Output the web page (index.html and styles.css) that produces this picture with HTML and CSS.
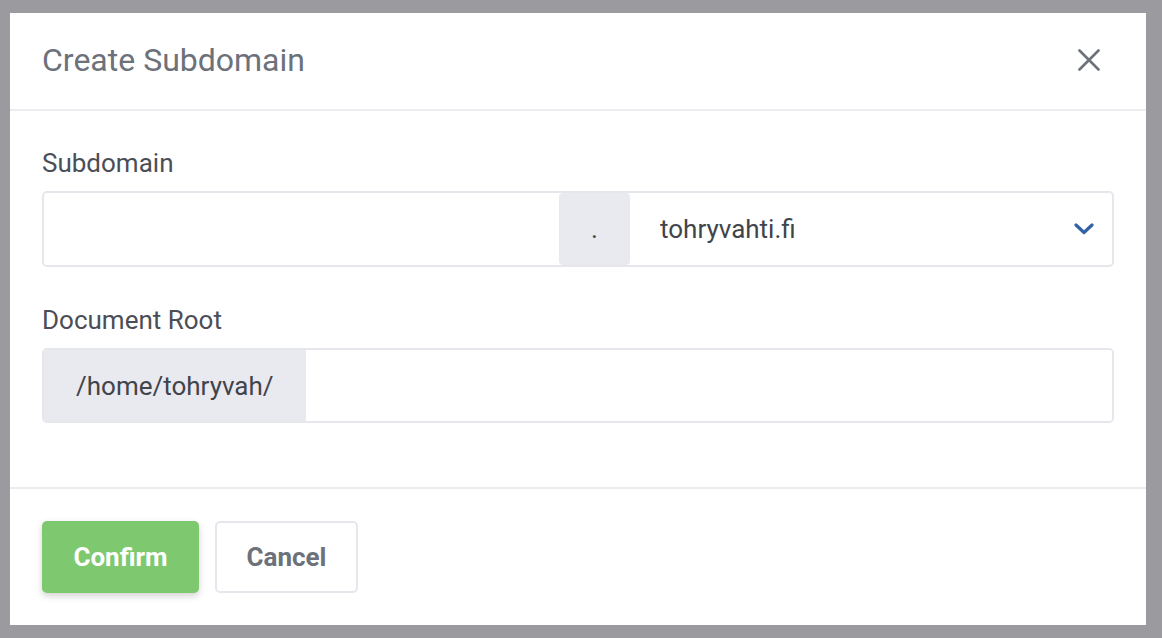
FILE: index.html
```html
<!DOCTYPE html>
<html lang="en">
<head>
<meta charset="utf-8">
<title>Create Subdomain</title>
<link rel="stylesheet" href="styles.css">
</head>
<body>
<div class="modal">
  <div class="modal-header">
    <h1 class="modal-title">Create Subdomain</h1>
    <button class="close-btn" aria-label="Close">
      <svg width="22" height="22" viewBox="0 0 22 22"><path d="M1.5 1.5 L20.5 20.5 M20.5 1.5 L1.5 20.5" stroke="#6c717a" stroke-width="2.6" stroke-linecap="round" fill="none"/></svg>
    </button>
  </div>
  <div class="modal-body">
    <div class="form-group">
      <label class="form-label">Subdomain</label>
      <div class="input-group">
        <input class="text-input sub-input" type="text">
        <span class="dot-addon">.</span>
        <div class="select">
          <span class="select-value">tohryvahti.fi</span>
          <svg class="chevron" width="20" height="12" viewBox="0 0 20 12"><path d="M2 2 L10 9.5 L18 2" stroke="#3262a8" stroke-width="3.2" fill="none" stroke-linecap="round" stroke-linejoin="round"/></svg>
        </div>
      </div>
    </div>
    <div class="form-group last">
      <label class="form-label">Document Root</label>
      <div class="input-group short">
        <span class="path-addon">/home/tohryvah/</span>
        <input class="text-input" type="text">
      </div>
    </div>
  </div>
  <div class="modal-footer">
    <button class="btn btn-confirm">Confirm</button>
    <button class="btn btn-cancel">Cancel</button>
  </div>
</div>
</body>
</html>
```

FILE: styles.css
```css
* { box-sizing: border-box; }
html, body { margin: 0; padding: 0; }
body {
  width: 1162px;
  height: 638px;
  background: #9b9b9f;
  font-family: Roboto, "Liberation Sans", sans-serif;
  overflow: hidden;
}
.modal {
  margin: 13px 0 0 10px;
  width: 1136px;
  height: 612px;
  background: #fff;
  display: flex;
  flex-direction: column;
}
.modal-header {
  height: 98px;
  border-bottom: 2px solid #ebebf0;
  display: flex;
  align-items: center;
  justify-content: space-between;
  padding: 0 46px 2px 32px;
}
.modal-title {
  margin: 0;
  font-size: 32px;
  font-weight: 400;
  line-height: 38px;
  color: #6c717a;
}
.close-btn {
  border: 0;
  background: none;
  padding: 0;
  width: 22px;
  height: 22px;
  display: flex;
  cursor: pointer;
}
.modal-body {
  padding: 38px 32px 0 32px;
  height: 378px;
  border-bottom: 2px solid #ebebf0;
}
.form-group { margin-bottom: 39px; }
.form-group.last { margin-bottom: 0; }
.form-label {
  display: block;
  font-size: 26px;
  line-height: 28px;
  color: #4b4e56;
  margin-bottom: 14px;
}
.input-group {
  display: flex;
  height: 76px;
  border: 2px solid #e6e7ec;
  border-radius: 5px;
  overflow: hidden;
}
.input-group.short { height: 75px; }
.text-input {
  flex: 1;
  border: 0;
  outline: none;
  background: #fff;
  font: inherit;
  font-size: 26px;
  padding: 0 20px;
  min-width: 0;
}
.sub-input { flex: 0 0 515px; }
.dot-addon {
  flex: 0 0 71px;
  background: #e9eaef;
  border-radius: 4px;
  display: flex;
  align-items: center;
  justify-content: center;
  font-size: 26px;
  color: #41444b;
}
.select {
  flex: 1;
  display: flex;
  align-items: center;
  justify-content: space-between;
  padding: 0 18px 0 30px;
}
.select-value {
  font-size: 26px;
  color: #41444b;
}
.chevron { display: block; }
.path-addon {
  background: #e9eaef;
  display: flex;
  align-items: center;
  padding: 0 33px 0 32px;
  font-size: 26px;
  color: #41444b;
  width: 262px;
}
.modal-footer {
  display: flex;
  gap: 16px;
  padding: 32px;
}
.btn {
  height: 72px;
  border-radius: 5px;
  font-family: inherit;
  font-size: 26px;
  font-weight: 700;
  cursor: pointer;
}
.btn-confirm {
  width: 157px;
  border: 0;
  background: #7ec86f;
  color: #fff;
  box-shadow: 0 3px 7px rgba(0, 0, 0, 0.18);
}
.btn-cancel {
  width: 143px;
  border: 2px solid #e6e7ec;
  background: #fff;
  color: #6c717a;
}
```
